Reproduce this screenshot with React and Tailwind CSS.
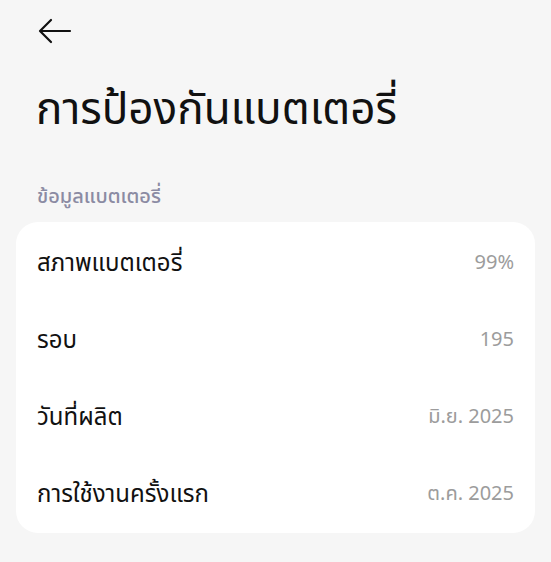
import React from "react";

const rows = [
  { label: "สภาพแบตเตอรี่", value: "99%" },
  { label: "รอบ", value: "195" },
  { label: "วันที่ผลิต", value: "มิ.ย. 2025" },
  { label: "การใช้งานครั้งแรก", value: "ต.ค. 2025" },
];

const BackArrow = () => (
  <svg width="34" height="26" viewBox="0 0 34 26" fill="none" stroke="#111" strokeWidth="2.2" strokeLinecap="round" strokeLinejoin="round">
    <path d="M32 13H3" />
    <path d="M13 2L2 13l11 11" />
  </svg>
);

export default function App() {
  return (
    <div
      className="min-h-[562px] w-full bg-[#f6f6f6] text-[#111]"
      style={{ fontFamily: '"Noto Sans", "Noto Sans Thai", "DejaVu Sans", sans-serif' }}
    >
      <div className="pl-[38px] pt-[18px]">
        <BackArrow />
      </div>

      <h1 className="mt-[35px] pl-[36px] text-[44px] leading-[56px] font-normal">การป้องกันแบตเตอรี่</h1>

      <div className="mt-[47px] pl-[37px] text-[20px] leading-[28px] font-medium text-[#8b8ba3]">ข้อมูลแบตเตอรี่</div>

      <div className="mx-[16px] mt-[12px] rounded-[22px] bg-white px-[21px] pt-[1px] pb-[2px]">
        {rows.map((r) => (
          <div key={r.label} className="flex h-[77px] items-center justify-between">
            <span className="text-[24px]">{r.label}</span>
            <span className="text-[20px] text-[#9c9c9c]">{r.value}</span>
          </div>
        ))}
      </div>
    </div>
  );
}
